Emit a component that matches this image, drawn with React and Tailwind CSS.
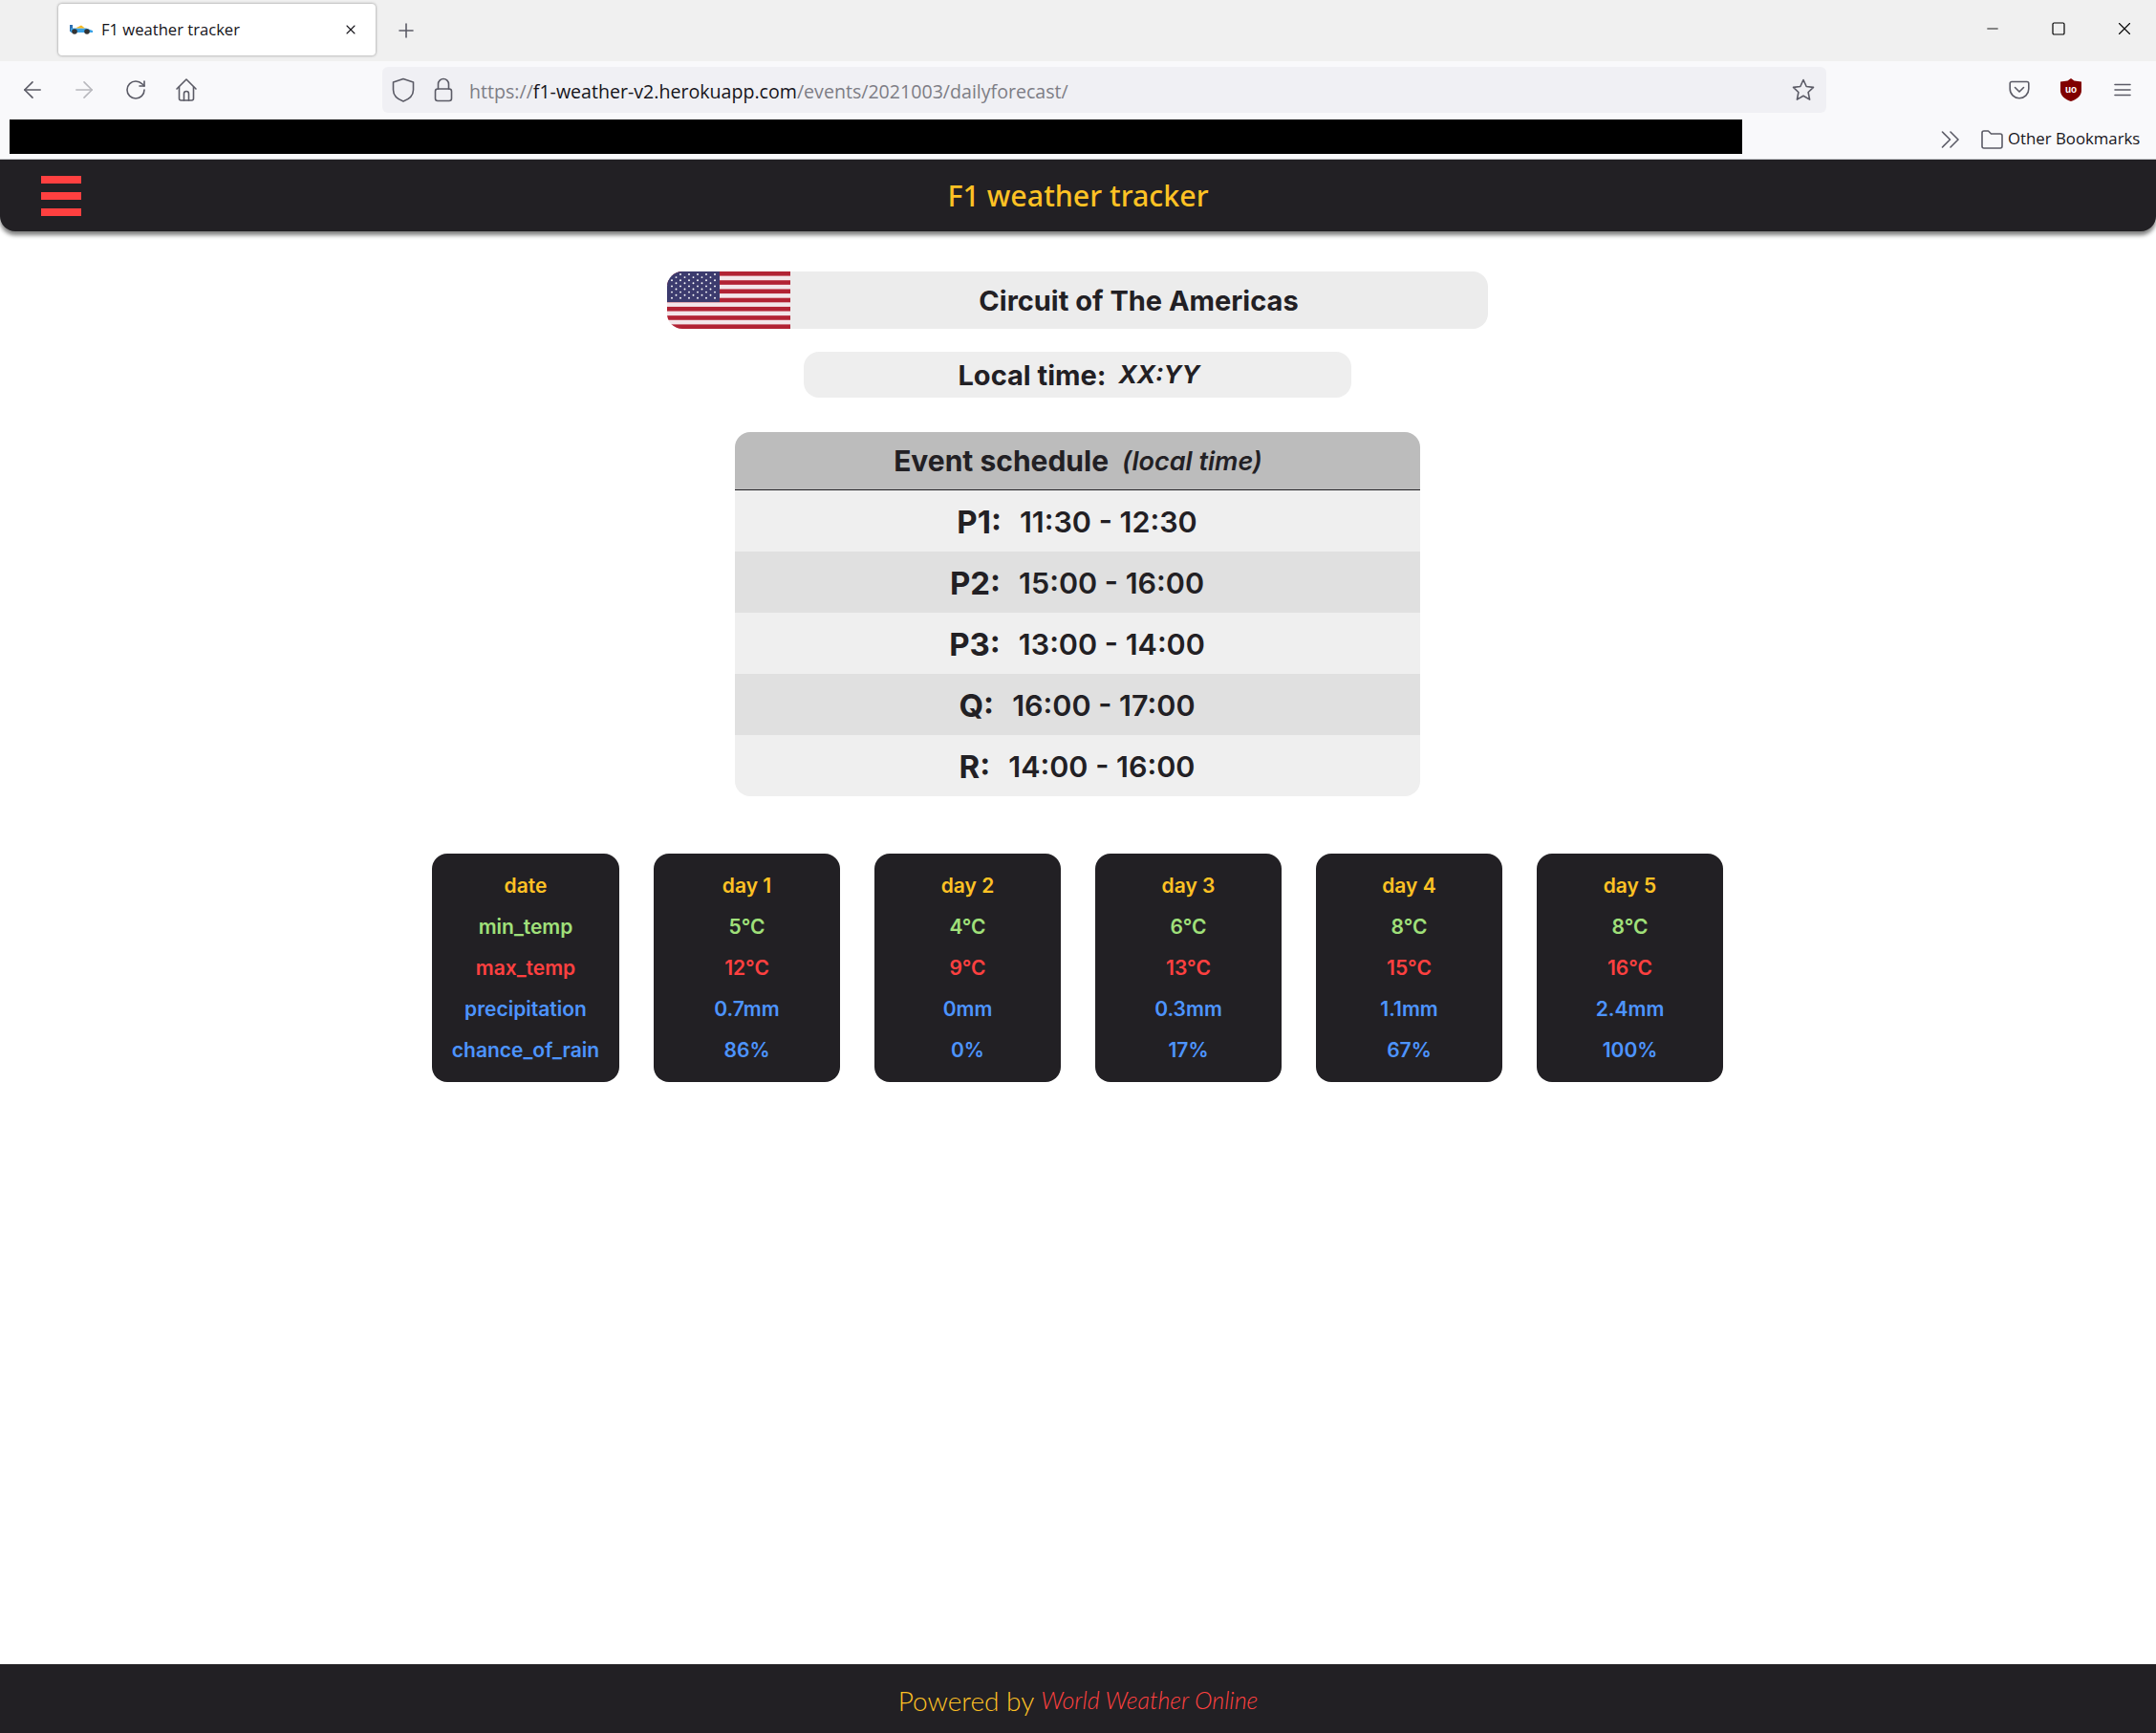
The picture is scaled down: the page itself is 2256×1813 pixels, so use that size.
import React from 'react';
import { ArrowLeft, ArrowRight, RotateCw, Plus, X, Minus, Square } from 'lucide-react';

const days = [
  { label: 'day 1', min: '5°C', max: '12°C', rain: '0.7mm', chance: '86%' },
  { label: 'day 2', min: '4°C', max: '9°C', rain: '0mm', chance: '0%' },
  { label: 'day 3', min: '6°C', max: '13°C', rain: '0.3mm', chance: '17%' },
  { label: 'day 4', min: '8°C', max: '15°C', rain: '1.1mm', chance: '67%' },
  { label: 'day 5', min: '8°C', max: '16°C', rain: '2.4mm', chance: '100%' },
];

const schedule = [
  { name: 'P1:', time: '11:30 - 12:30', bg: 'bg-[#efefef]' },
  { name: 'P2:', time: '15:00 - 16:00', bg: 'bg-[#e0e0e0]' },
  { name: 'P3:', time: '13:00 - 14:00', bg: 'bg-[#efefef]' },
  { name: 'Q:', time: '16:00 - 17:00', bg: 'bg-[#e0e0e0]' },
  { name: 'R:', time: '14:00 - 16:00', bg: 'bg-[#efefef]' },
];

const UsFlag = () => {
  const stripes = [0, 2, 4, 6, 8, 10, 12];
  const stars = [];
  for (let r = 0; r < 9; r++) {
    const cols = r % 2 === 0 ? 6 : 5;
    for (let c = 0; c < cols; c++) {
      stars.push(<circle key={r + '-' + c} cx={(r % 2 === 0 ? 5 : 9.5) + c * 9} cy={3 + r * 3.1} r="0.95" fill="#fff" />);
    }
  }
  return (
    <svg width="129" height="60" viewBox="0 0 129 60" className="block shrink-0">
      <rect width="129" height="60" fill="#f3e6ea" />
      {stripes.map((i) => (
        <rect key={i} y={(i * 60) / 13} width="129" height={60 / 13} fill="#b22234" />
      ))}
      <rect width="55" height="32" fill="#3c3b6e" />
      {stars}
    </svg>
  );
};

const Favicon = () => (
  <svg width="25" height="10" viewBox="0 0 25 10" className="shrink-0">
    <rect x="0" y="0" width="3" height="7" fill="#2f6fb0" />
    <path d="M1 3.500h16l7 2.500v2H1z" fill="#3ba3e6" />
    <path d="M6 3.500 12 .500l4 3z" fill="#f5b820" />
    <circle cx="5" cy="7" r="2.800" fill="#333" />
    <circle cx="18" cy="7" r="2.800" fill="#333" />
  </svg>
);

const ic = { fill: 'none', stroke: '#5b5b66', strokeWidth: 1.6, strokeLinecap: 'round', strokeLinejoin: 'round' };

const HomeIcon = () => (
  <svg width="24" height="26" viewBox="0 0 24 26" {...ic}>
    <path d="M2 12 12 2l10 10" />
    <path d="M4.5 10v12a2 2 0 0 0 2 2h11a2 2 0 0 0 2-2V10" />
    <path d="M9.5 24v-7a2.5 2.5 0 0 1 5 0v7" />
  </svg>
);

const ShieldIcon = () => (
  <svg width="24" height="26" viewBox="0 0 24 26" {...ic}>
    <path d="M12 1.500 22.500 5v8c0 6-5 10-10.500 12C6.500 23 1.500 19 1.500 13V5z" />
  </svg>
);

const LockIcon = () => (
  <svg width="20" height="26" viewBox="0 0 20 26" {...ic}>
    <rect x="1.500" y="12" width="17" height="12.500" rx="2.500" />
    <path d="M4.500 12V7a5.500 5.500 0 0 1 11 0v5" />
  </svg>
);

const StarIcon = () => (
  <svg width="24" height="24" viewBox="0 0 24 24" {...ic}>
    <path d="M12 1.500l3.200 7 7.300.9-5.400 5.100 1.500 7.600-6.600-3.800-6.600 3.800 1.500-7.600L1.500 9.400l7.300-.9z" />
  </svg>
);

const PocketIcon = () => (
  <svg width="22" height="20" viewBox="0 0 22 20" {...ic}>
    <path d="M3 1.500h16a1.800 1.800 0 0 1 1.800 1.800V9a9.800 9.800 0 0 1-19.600 0V3.300A1.800 1.800 0 0 1 3 1.500z" />
    <path d="M6.500 7.500 11 12l4.500-4.500" />
  </svg>
);

const UblockIcon = () => (
  <svg width="22" height="24" viewBox="0 0 22 24">
    <path d="M11 0l3.500 2.500L22 3.500V13c0 5-5 9-11 11C5 22 0 18 0 13V3.500l7.500-1z" fill="#800000" />
    <text x="11" y="14.500" textAnchor="middle" fontSize="10" fontWeight="700" fill="#fff" fontFamily="'Liberation Sans', sans-serif">uo</text>
  </svg>
);

const MenuLines = () => (
  <svg width="18" height="14" viewBox="0 0 18 14" stroke="#5b5b66" strokeWidth="1.6" strokeLinecap="round">
    <path d="M1 1.500h16M1 7h16M1 12.500h16" />
  </svg>
);

const FolderIcon = () => (
  <svg width="23" height="20" viewBox="0 0 23 20" {...ic}>
    <path d="M1 3a2 2 0 0 1 2-2h4.500l3 3H20a2 2 0 0 1 2 2v11a2 2 0 0 1-2 2H3a2 2 0 0 1-2-2z" />
  </svg>
);

const ChevronsIcon = () => (
  <svg width="20" height="18" viewBox="0 0 20 18" {...ic}>
    <path d="M1.500 1 9.500 9l-8 8M10 1l8 8-8 8" />
  </svg>
);

const Browser = () => (
  <div className="font-['Open_Sans',sans-serif]">
    {/* tab strip */}
    <div className="h-[64px] bg-[#f0f0f0] flex items-start pt-[4px] pl-[61px]">
      <div className="w-[332px] h-[54px] bg-white rounded-[4px] shadow-[0_0_3px_rgba(0,0,0,0.45)] flex items-center pl-[12px] pr-[18px]">
        <Favicon />
        <span className="ml-[8px] text-[16.6px] text-[#15141a] leading-none">F1 weather tracker</span>
        <X className="ml-auto text-[#15141a]" size={16} strokeWidth={1.6} />
      </div>
      <Plus className="ml-[20px] mt-[16px] text-[#5b5b66]" size={24} strokeWidth={1.6} />
      <div className="ml-auto flex items-center h-[52px] pr-[22px]">
        <Minus className="text-black" size={18} strokeWidth={1.2} />
        <Square className="ml-[52px] text-black" size={16} strokeWidth={1.2} absoluteStrokeWidth />
        <X className="ml-[50px] text-black" size={22} strokeWidth={1.2} />
      </div>
    </div>
    {/* nav toolbar */}
    <div className="h-[61px] bg-[#f9f9fb] flex items-start pt-[6px]">
      <div className="w-[400px] h-[48px] flex items-center pl-[20px]">
        <ArrowLeft className="text-[#5b5b66]" size={28} strokeWidth={1.4} />
        <ArrowRight className="ml-[26px] text-[#b8b8bd]" size={28} strokeWidth={1.4} />
        <RotateCw className="ml-[28px] text-[#5b5b66]" size={24} strokeWidth={1.6} />
        <div className="ml-[29px]"><HomeIcon /></div>
      </div>
      <div className="w-[1511px] h-[48px] bg-[#f0f0f4] rounded-[6px] flex items-center pl-[10px] pr-[12px]">
        <ShieldIcon />
        <div className="ml-[20px]"><LockIcon /></div>
        <div className="ml-[17px] pt-[3px] text-[19.6px] leading-none text-[#7d7d85] whitespace-nowrap">
          https://<span className="text-[#15141a]">f1-weather-v2.herokuapp.com</span>/events/2021003/dailyforecast/
        </div>
        <div className="ml-auto"><StarIcon /></div>
      </div>
      <div className="flex-1 h-[48px] flex items-center pl-[191px]">
        <PocketIcon />
        <div className="ml-[32px]"><UblockIcon /></div>
        <div className="ml-[34px]"><MenuLines /></div>
      </div>
    </div>
    {/* bookmarks */}
    <div className="h-[42px] bg-[#f9f9fb] border-b border-[#c8c8cc] flex items-start pl-[10px]">
      <div className="w-[1813px] h-[36px] bg-black" />
      <div className="flex items-center h-[41px] ml-[208px]">
        <ChevronsIcon />
        <div className="ml-[22px]"><FolderIcon /></div>
        <span className="ml-[5px] text-[16.8px] text-[#15141a] whitespace-nowrap leading-none">Other Bookmarks</span>
      </div>
    </div>
  </div>
);

const WeatherCard = ({ width, label, min, max, rain, chance }) => (
  <div className={`${width} h-[239px] bg-[#222024] rounded-[16px] py-[12px] pl-[1px] flex flex-col items-center text-[21px] font-semibold`}>
    <div className="h-[43px] leading-[43px] text-[#ffc224]">{label}</div>
    <div className="h-[43px] leading-[43px] text-[#a0e07a]">{min}</div>
    <div className="h-[43px] leading-[43px] text-[#ff4040]">{max}</div>
    <div className="h-[43px] leading-[43px] text-[#4d94ff]">{rain}</div>
    <div className="h-[43px] leading-[43px] text-[#4d94ff]">{chance}</div>
  </div>
);

export default function App() {
  return (
    <div className="h-[1813px] bg-white flex flex-col overflow-hidden">
      <Browser />

      <header className="h-[75px] shrink-0 bg-[#222024] rounded-b-[16px] shadow-[0_4px_4px_rgba(0,0,0,0.5)] grid grid-cols-[1fr_auto_1fr] items-center px-[43px] relative">
        <div className="w-[42px] flex flex-col gap-[9px]">
          <div className="h-[8px] bg-[#ff4040]" />
          <div className="h-[8px] bg-[#ff4040]" />
          <div className="h-[8px] bg-[#ff4040]" />
        </div>
        <h1 className="pt-[1px] text-[#ffc224] text-[30.4px] font-medium font-['Noto_Sans',sans-serif] leading-none">F1 weather tracker</h1>
        <div />
      </header>

      <main className="flex-1 flex flex-col items-center pt-[42px] pr-[2px] text-[#222024] font-['Inter',sans-serif]">
        <div className="w-[859px] h-[60px] bg-[#ececec] rounded-[16px] overflow-hidden flex items-center">
          <UsFlag />
          <div className="flex-1 text-center text-[29px] font-bold leading-none">Circuit of The Americas</div>
        </div>

        <div className="mt-[24px] w-[573px] h-[48px] pl-[4px] bg-[#eeeeee] rounded-[16px] flex items-center justify-center gap-[13px]">
          <span className="text-[29px] font-bold leading-none">Local time:</span>
          <span className="text-[26px] font-bold italic leading-none">XX:YY</span>
        </div>

        <div className="mt-[36px] w-[717px] rounded-[16px] overflow-hidden">
          <div className="h-[61px] pl-[2px] bg-[#bcbcbc] border-b-[1.5px] border-[#222024] flex items-center justify-center gap-[14px]">
            <span className="text-[30px] font-bold leading-none">Event schedule</span>
            <span className="text-[27px] font-semibold italic leading-none">(local time)</span>
          </div>
          {schedule.map((row) => (
            <div key={row.name} className={`${row.bg} h-[64px] pt-[2px] flex items-center justify-center gap-[19px]`}>
              <span className="text-[33px] font-bold leading-none">{row.name}</span>
              <span className="text-[30.5px] font-semibold leading-none">{row.time}</span>
            </div>
          ))}
        </div>

        <div className="mt-[60px] flex justify-center gap-[36px]">
          <WeatherCard width="w-[196px]" label="date" min="min_temp" max="max_temp" rain="precipitation" chance="chance_of_rain" />
          {days.map((d) => (
            <WeatherCard key={d.label} width="w-[195px]" {...d} />
          ))}
        </div>
      </main>

      <footer className="h-[72px] shrink-0 pt-[3px] bg-[#222024] flex items-center justify-center gap-[7px] font-light font-['Lato',sans-serif]">
        <span className="text-[28px] text-[#ffc224]">Powered by</span>
        <span className="text-[25px] text-[#ff4040] italic">World Weather Online</span>
      </footer>
    </div>
  );
}
